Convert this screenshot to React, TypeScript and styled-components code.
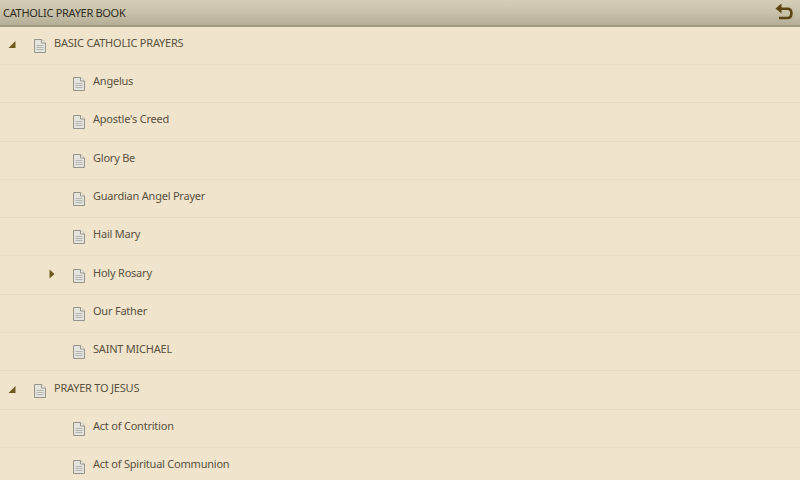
import React from "react";
import styled, { createGlobalStyle } from "styled-components";

const Global = createGlobalStyle`
  html, body { margin: 0; padding: 0; width: 800px; height: 480px; overflow: hidden; background: #f0e4cc; }
`;

const Screen = styled.div`
  width: 800px;
  height: 480px;
  overflow: hidden;
  display: flex;
  flex-direction: column;
  background: #f0e4cc;
  font-family: "Noto Sans", "Open Sans", sans-serif;
`;

const Header = styled.header`
  height: 26.7px;
  box-sizing: border-box;
  flex: none;
  display: flex;
  align-items: center;
  justify-content: space-between;
  padding: 0 7px 0 3px;
  background: linear-gradient(#d6cfb8 0%, #c9c2aa 50%, #b5ae98 100%);
  border-bottom: 2px solid #a39a80;
`;

const Title = styled.h1`
  margin: 0;
  font-size: 11px;
  font-weight: 400;
  color: #2e2a1e;
  letter-spacing: -0.3px;
`;

const List = styled.div`
  display: flex;
  flex-direction: column;
`;

const Row = styled.div`
  height: 38.3px;
  box-sizing: border-box;
  flex: none;
  display: flex;
  align-items: center;
  border-bottom: 1px solid #e7dcc4;
`;

const ArrowSlot = styled.div<{ $indent: number }>`
  width: ${(p) => p.$indent}px;
  flex: none;
  align-self: stretch;
  display: flex;
  align-items: center;
  justify-content: flex-end;
  padding-right: 17px;
  padding-bottom: 2px;
  box-sizing: border-box;
`;

const IconSlot = styled.div`
  width: 14px;
  height: 15px;
  flex: none;
  margin: 0 7px 0 0;
  line-height: 0;
`;

const Label = styled.span`
  font-size: 11px;
  letter-spacing: -0.22px;
  color: #5a5140;
  position: relative;
  top: -3px;
`;

const DocIcon = () => (
  <svg width="14" height="15" viewBox="0 0 14 15">
    <path d="M1.5 1.5H8.5L12.5 5V14.5H1.5Z" fill="#e4e3dc" stroke="#96948a" />
    <path d="M8.5 1.5V5H12.5" fill="#f6f4ec" stroke="#96948a" />
    <path d="M3.5 7.5H10.5M3.5 9.5H10.5M3.5 11.5H10.5" stroke="#b4b6b4" />
  </svg>
);

const OpenArrow = () => (
  <svg width="8" height="7" viewBox="0 0 8 7">
    <path d="M7.5 0V7H0.5Z" fill="#6f5a1e" />
  </svg>
);

const ClosedArrow = () => (
  <svg width="6" height="10" viewBox="0 0 6 10">
    <path d="M0.5 0.5L5.5 5L0.5 9.5Z" fill="#6f5a1e" />
  </svg>
);

const BackIcon = () => (
  <svg width="18" height="18" viewBox="0 0 18 18">
    <path d="M5 5.8H12.5C15.2 5.8 16.4 7.6 16.4 10.2C16.4 13 15.2 15 12.5 15H4" fill="none" stroke="#5c4510" strokeWidth="2.6" />
    <path d="M6.5 0.5V10.5L0.5 5.6Z" fill="#5c4510" />
  </svg>
);

type Item = { label: string; level: 0 | 1; arrow?: "open" | "closed" };

const items: Item[] = [
  { label: "BASIC CATHOLIC PRAYERS", level: 0, arrow: "open" },
  { label: "Angelus", level: 1 },
  { label: "Apostle's Creed", level: 1 },
  { label: "Glory Be", level: 1 },
  { label: "Guardian Angel Prayer", level: 1 },
  { label: "Hail Mary", level: 1 },
  { label: "Holy Rosary", level: 1, arrow: "closed" },
  { label: "Our Father", level: 1 },
  { label: "SAINT MICHAEL", level: 1 },
  { label: "PRAYER TO JESUS", level: 0, arrow: "open" },
  { label: "Act of Contrition", level: 1 },
  { label: "Act of Spiritual Communion", level: 1 },
];

export default function App() {
  return (
    <Screen>
      <Global />
      <Header>
        <Title>CATHOLIC PRAYER BOOK</Title>
        <BackIcon />
      </Header>
      <List>
        {items.map((it) => (
          <Row key={it.label}>
            <ArrowSlot $indent={it.level === 0 ? 33 : 72}>
              {it.arrow === "open" && <OpenArrow />}
              {it.arrow === "closed" && <ClosedArrow />}
            </ArrowSlot>
            <IconSlot>
              <DocIcon />
            </IconSlot>
            <Label>{it.label}</Label>
          </Row>
        ))}
      </List>
    </Screen>
  );
}
